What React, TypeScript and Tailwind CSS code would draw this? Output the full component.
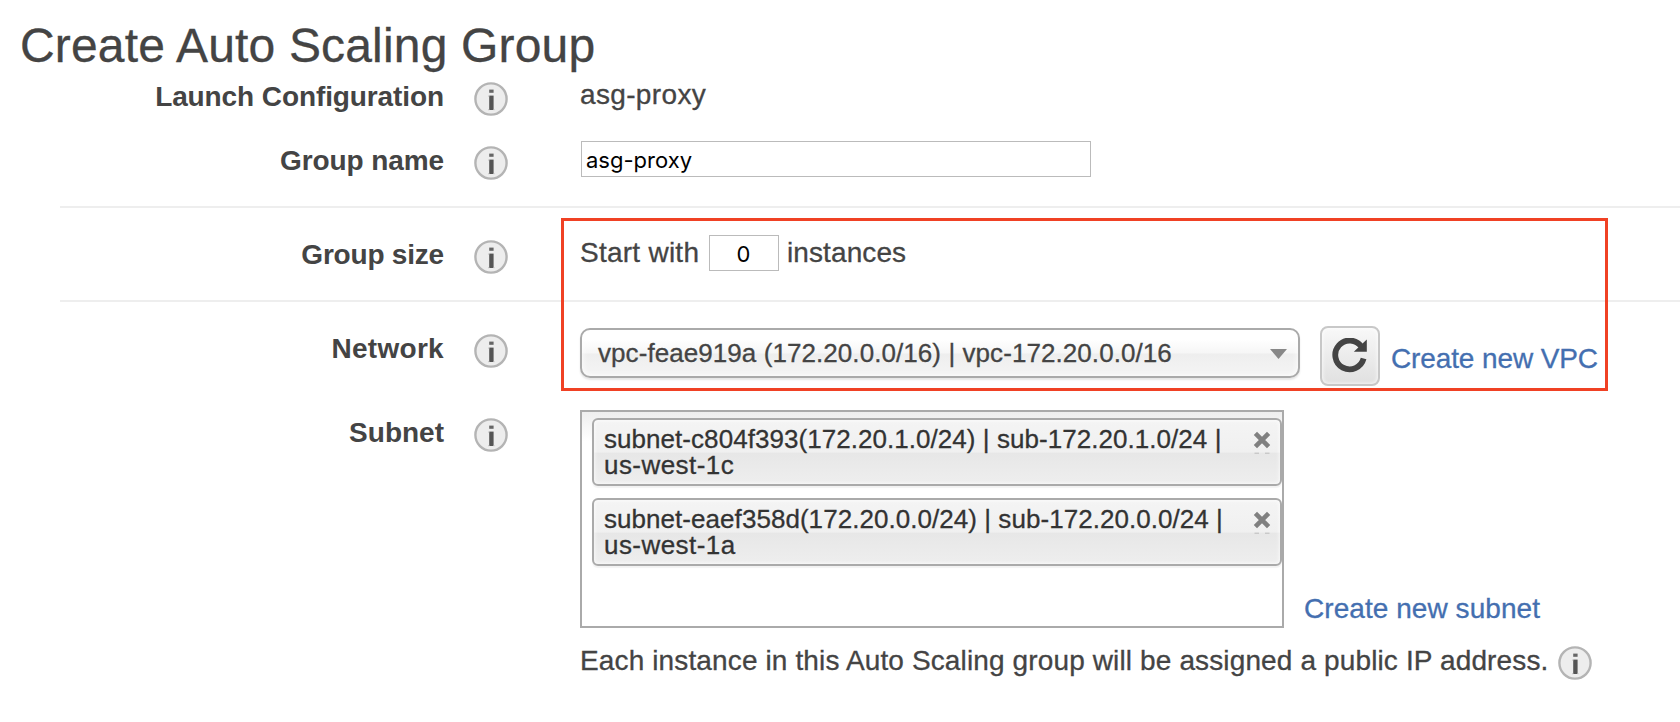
import type { ReactNode } from "react";

function InfoIcon() {
  return (
    <svg width="34" height="34" viewBox="0 0 34 34" className="block shrink-0">
      <circle cx="17" cy="17" r="15.6" fill="#ededed" stroke="#b4b4b4" strokeWidth="2.4" />
      <path d="M15.2 7.6h4.4v3.2h-4.4z" fill="#666" />
      <path d="M15.2 13.6h4.4v14.4h-4.4z" fill="#555" />
      <path d="M14 13.6h1.2v1.2H14zM14 27h1.2v1.2H14zM19.6 27h1v1.2h-1z" fill="#ccc" />
    </svg>
  );
}

function RefreshIcon() {
  return (
    <svg width="36" height="36" viewBox="0 0 36 36" className="block">
      <path d="M31.6 20.6A14.4 14.4 0 1 1 29.5 8.7" fill="none" stroke="#444" strokeWidth="5.8" />
      <path d="M34.8 1.6v12.2H21.8z" fill="#444" />
    </svg>
  );
}

function CloseIcon() {
  return (
    <svg width="18" height="24" viewBox="0 0 18 24" className="block">
      <path d="M2.4 2.4l13.2 13.2M15.6 2.4L2.4 15.6" stroke="#808080" strokeWidth="4.6" />
      <path d="M1.5 22.2h4.5M12 22.2h4.5" stroke="#bbb" strokeWidth="1" />
    </svg>
  );
}

type FieldProps = { label: string; offset: string; tracking?: string; children: ReactNode };

function Field({ label, offset, tracking = "", children }: FieldProps) {
  return (
    <div className="flex items-start">
      <div className={"flex w-[448px] shrink-0 justify-between " + offset}>
        <label className={"w-96 pt-px text-right font-bold " + tracking}>{label}</label>
        <span className="pt-0.5">
          <InfoIcon />
        </span>
      </div>
      <div className="ml-[72px] [-webkit-text-stroke:0.3px]">{children}</div>
    </div>
  );
}

function SubnetChip({ name, zone }: { name: string; zone: string }) {
  return (
    <li className="flex h-[68px] w-[690px] items-start justify-between rounded-[6px] border-2 border-[#aaa] bg-[linear-gradient(#f4f4f4_0%,#f0f0f0_50%,#e7e7e7_52%,#eee_100%)] pt-1.5 pr-[9px] pl-2.5 text-[26px] leading-[26px] text-[#333] shadow-[0_2px_1px_rgba(0,0,0,0.05),inset_0_0_4px_#fff]">
      <div>
        <div className="tracking-[0.05px]">{name} |</div>
        <div className="tracking-[0.45px]">{zone}</div>
      </div>
      <button type="button" aria-label="Remove" className="pt-[5px]">
        <CloseIcon />
      </button>
    </li>
  );
}

export default function App() {
  return (
    <main className="relative h-[722px] w-[1680px] overflow-hidden bg-white pt-[17px] font-['Liberation_Sans',Arial,sans-serif] text-[28px] leading-8 whitespace-nowrap text-[#444]">
      <h1 className="h-14 pt-px pl-5 text-5xl leading-[56px] tracking-[0.17px] [-webkit-text-stroke:0.3px]">
        Create Auto Scaling Group
      </h1>

      <div className="ml-[60px]">
        <section className="h-[133px]">
          <div className="h-[68px]">
            <Field label="Launch Configuration" offset="pt-[7px]" tracking="tracking-[-0.1px]">
              <div className="pt-1.5 tracking-[0.35px]">asg-proxy</div>
            </Field>
          </div>
          <Field label="Group name" offset="pt-[3px]" tracking="tracking-[-0.1px]">
            <input
              defaultValue="asg-proxy"
              className="ml-px block h-9 w-[510px] border border-[#bbb] px-1 pt-0.5 font-[Inter,sans-serif] text-[22px] text-black outline-none [-webkit-text-stroke:0]"
            />
          </Field>
        </section>

        <section className="h-[94px] border-t-2 border-[#eee] pt-[27px]">
          <Field label="Group size" offset="pt-[3px]" tracking="tracking-[-0.2px]">
            <div className="flex items-start">
              <span className="w-[129px] pt-0.5 tracking-[0.25px]">Start with</span>
              <input
                defaultValue="0"
                className="mr-2 block h-9 w-[70px] border border-[#bbb] pt-0.5 pr-px text-center font-[Inter,sans-serif] text-[22px] text-black outline-none [-webkit-text-stroke:0]"
              />
              <span className="pt-0.5 tracking-[0.1px]">instances</span>
            </div>
          </Field>
        </section>

        <section className="border-t-2 border-[#eee] pt-6">
          <div className="h-[84px]">
            <Field label="Network" offset="pt-1.5" tracking="tracking-[0.3px]">
              <div className="flex items-start">
                <div className="mt-0.5 flex h-[50px] w-[720px] items-center justify-between rounded-[10px] border-2 border-[#aaa] bg-[linear-gradient(#fff_20%,#f6f6f6_50%,#eee_52%,#f4f4f4_100%)] pr-[11px] pl-4 text-[26px] shadow-[0_2px_2px_rgba(0,0,0,0.1),inset_0_0_6px_#fff]">
                  <span className="tracking-[0.07px]">vpc-feae919a (172.20.0.0/16) | vpc-172.20.0.0/16</span>
                  <svg width="17" height="10" viewBox="0 0 17 10" className="mt-0.5">
                    <path d="M0 0h17L8.5 10z" fill="#888" />
                  </svg>
                </div>
                <button
                  type="button"
                  aria-label="Refresh"
                  className="ml-5 flex h-[60px] w-[60px] items-center justify-center rounded-lg border-2 border-[#c8c8c8] bg-[linear-gradient(#f8f8f8,#e0e0e0)] pr-px shadow-[inset_0_0_4px_#fff]"
                >
                  <RefreshIcon />
                </button>
                <a className="ml-[11px] pt-[17px] tracking-[-0.12px] text-[#446fb0]">Create new VPC</a>
              </div>
            </Field>
          </div>

          <Field label="Subnet" offset="pt-1.5">
            <div className="flex items-end">
              <ul className="flex h-[218px] w-[704px] flex-col gap-3 border-2 border-[#aaa] bg-[linear-gradient(#eee,#fff_30px)] pt-1.5 pl-2.5">
                <SubnetChip name="subnet-c804f393(172.20.1.0/24) | sub-172.20.1.0/24" zone="us-west-1c" />
                <SubnetChip name="subnet-eaef358d(172.20.0.0/24) | sub-172.20.0.0/24" zone="us-west-1a" />
              </ul>
              <a className="ml-5 pb-[3px] tracking-[0.06px] text-[#446fb0]">Create new subnet</a>
            </div>
            <div className="mt-4 flex items-start">
              <span className="pt-px tracking-[0.13px]">
                Each instance in this Auto Scaling group will be assigned a public IP address.
              </span>
              <span className="ml-2.5 pt-0.5">
                <InfoIcon />
              </span>
            </div>
          </Field>
        </section>
      </div>

      <div className="pointer-events-none absolute top-[218px] left-[561px] h-[173px] w-[1047px] border-3 border-[#f04124]" />
    </main>
  );
}
